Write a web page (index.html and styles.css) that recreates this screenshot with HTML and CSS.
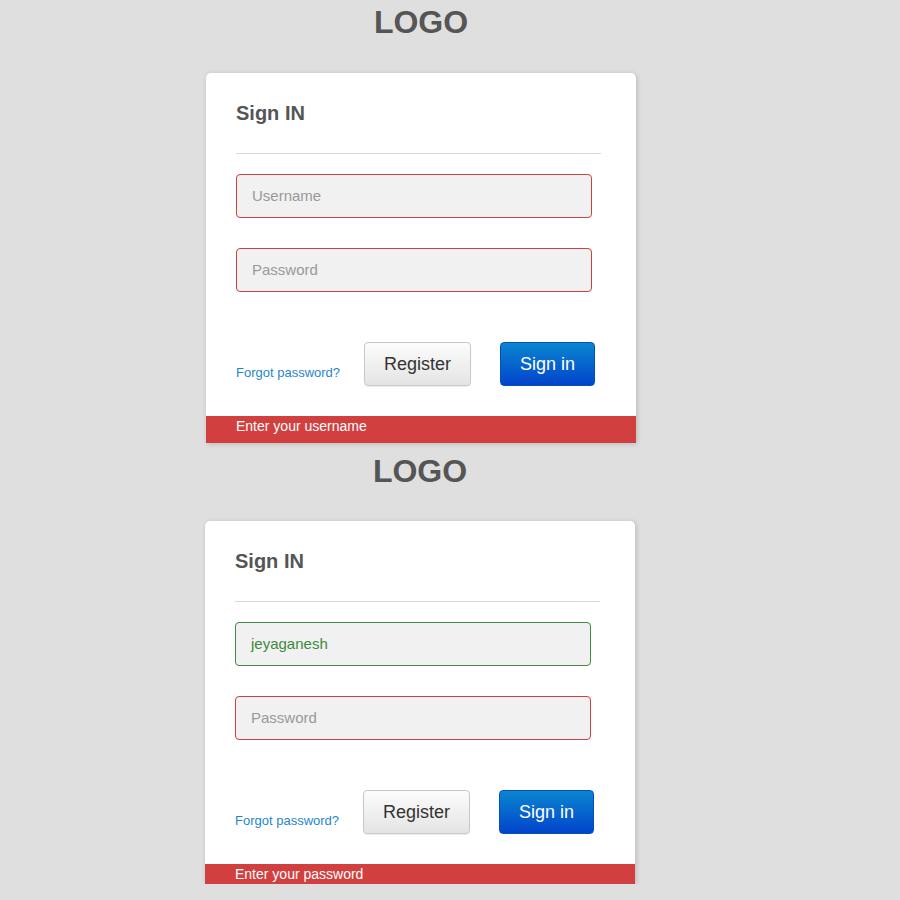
FILE: index.html
```html
<!DOCTYPE html>
<html>
<head>
<meta charset="utf-8">
<link rel="stylesheet" href="styles.css">
</head>
<body>
<div class="wrap">
  <h1 class="logo">LOGO</h1>
  <div class="card">
    <h2 class="title">Sign IN</h2>
    <div class="divider"></div>
    <div class="field field-error"><span class="ph">Username</span></div>
    <div class="field field-error"><span class="ph">Password</span></div>
    <div class="actions">
      <a class="forgot">Forgot password?</a>
      <button class="btn btn-default">Register</button>
      <button class="btn btn-primary">Sign in</button>
    </div>
    <div class="error-bar">Enter your username</div>
  </div>
</div>
<div class="wrap wrap-2">
  <h1 class="logo">LOGO</h1>
  <div class="card">
    <h2 class="title">Sign IN</h2>
    <div class="divider"></div>
    <div class="field field-ok"><span class="val">jeyaganesh</span></div>
    <div class="field field-error"><span class="ph">Password</span></div>
    <div class="actions">
      <a class="forgot">Forgot password?</a>
      <button class="btn btn-default">Register</button>
      <button class="btn btn-primary">Sign in</button>
    </div>
    <div class="error-bar error-bar-short">Enter your password</div>
  </div>
</div>
</body>
</html>
```
FILE: styles.css
```css
html, body {
  margin: 0;
  padding: 0;
  background: #dfdfdf;
  font-family: "Liberation Sans", Arial, sans-serif;
}
.wrap {
  width: 842px;
}
.wrap-2 {
  width: 840px;
}
.logo {
  box-sizing: border-box;
  margin: 0;
  padding-top: 2px;
  height: 73px;
  font-size: 32px;
  line-height: 40px;
  font-weight: bold;
  color: #555;
  text-align: center;
}
.wrap-2 .logo {
  padding-top: 8px;
  height: 78px;
}
.card {
  width: 430px;
  margin: 0 auto;
  background: #fff;
  border-radius: 5px 5px 0 0;
  box-shadow: 1px 1px 5px rgba(0, 0, 0, 0.18);
  padding-top: 28px;
}
.title {
  margin: 0 0 0 30px;
  font-size: 20px;
  line-height: 24px;
  font-weight: bold;
  color: #555;
}
.divider {
  margin: 28px 0 0 30px;
  width: 365px;
  height: 1px;
  background: #d9d9d9;
}
.field {
  box-sizing: border-box;
  margin: 20px 0 0 30px;
  width: 356px;
  height: 44px;
  border-radius: 4px;
  background: #f1f1f1;
  display: flex;
  align-items: center;
  padding: 0 0 2px 15px;
  font-size: 15px;
}
.field + .field {
  margin-top: 30px;
}
.field-error {
  border: 1px solid #c9433f;
}
.field-ok {
  border: 1px solid #3f8a3f;
}
.ph {
  color: #999;
}
.val {
  color: #3d8a3d;
}
.actions {
  display: flex;
  align-items: center;
  margin: 50px 0 0 30px;
  height: 44px;
}
.forgot {
  flex: 0 0 128px;
  font-size: 13px;
  color: #1f86cc;
  margin-top: 17px;
}
.btn {
  box-sizing: border-box;
  height: 44px;
  border-radius: 4px;
  font-family: "Liberation Sans", Arial, sans-serif;
  font-size: 18px;
  padding: 0;
  cursor: pointer;
}
.btn-default {
  width: 107px;
  color: #333;
  background: linear-gradient(#fcfcfc, #e4e4e4);
  border: 1px solid #c8c8c8;
  box-shadow: 0 1px 1px rgba(0, 0, 0, 0.08);
}
.btn-primary {
  width: 95px;
  margin-left: 29px;
  color: #fff;
  background: linear-gradient(#0a86d0, #0244cc);
  border: 1px solid #0250bd;
}
.error-bar {
  margin-top: 30px;
  background: #d13f3f;
  color: #fff;
  font-size: 14px;
  line-height: 16px;
  padding: 2px 30px 9px;
}
.error-bar-short {
  padding-bottom: 2px;
}
```
